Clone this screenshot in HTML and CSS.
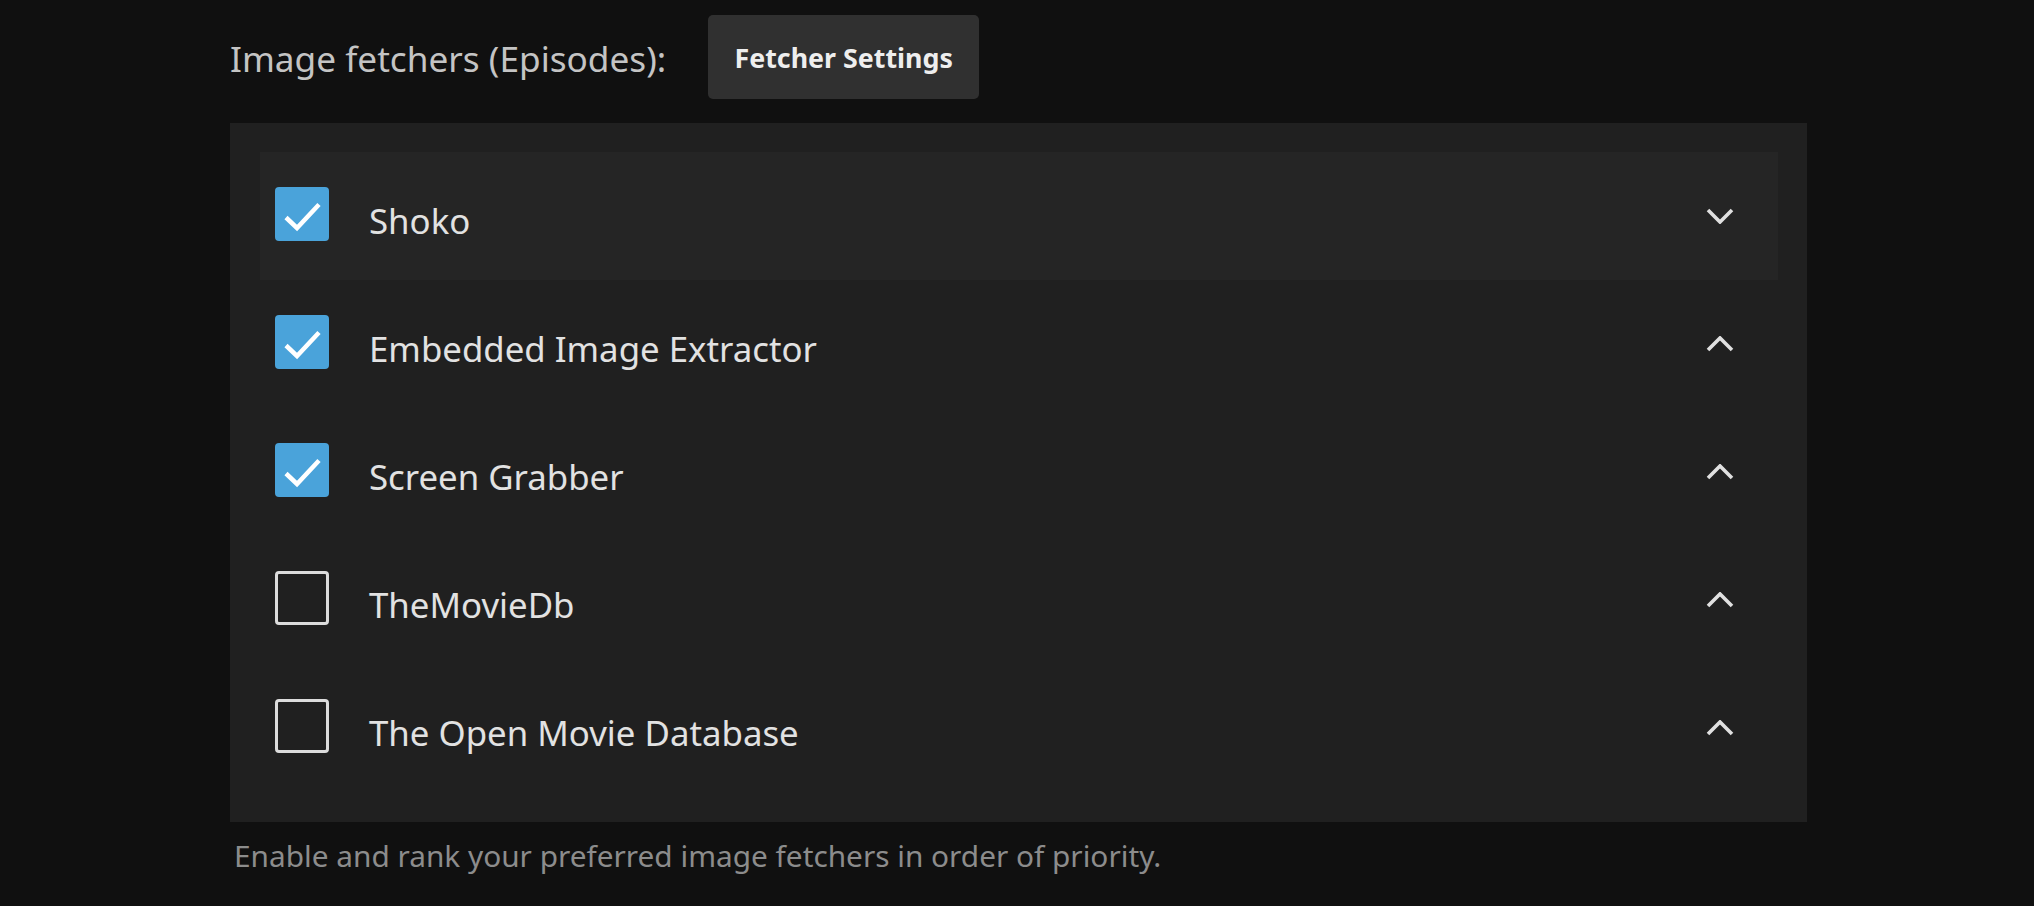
FILE: index.html
```html
<!DOCTYPE html>
<html>
<head>
<meta charset="utf-8">
<link rel="stylesheet" href="styles.css">
</head>
<body>
<div class="section">
  <div class="header">
    <h3 class="title">Image fetchers (Episodes):</h3>
    <button class="btn">Fetcher Settings</button>
  </div>
  <div class="panel">
    <div class="row active">
      <span class="cb checked"><svg viewBox="0 0 54 54" width="54" height="54"><polyline points="11,30.5 22,41 44,17.5" fill="none" stroke="#fff" stroke-width="4.5"/></svg></span>
      <span class="label">Shoko</span>
      <svg class="chev" viewBox="0 0 28 16" width="28" height="16"><polyline points="2,2 14,14 26,2" fill="none" stroke="#e0e0e0" stroke-width="3.6"/></svg>
    </div>
    <div class="row">
      <span class="cb checked"><svg viewBox="0 0 54 54" width="54" height="54"><polyline points="11,30.5 22,41 44,17.5" fill="none" stroke="#fff" stroke-width="4.5"/></svg></span>
      <span class="label">Embedded Image Extractor</span>
      <svg class="chev" viewBox="0 0 28 16" width="28" height="16"><polyline points="2,14 14,2 26,14" fill="none" stroke="#e0e0e0" stroke-width="3.6"/></svg>
    </div>
    <div class="row">
      <span class="cb checked"><svg viewBox="0 0 54 54" width="54" height="54"><polyline points="11,30.5 22,41 44,17.5" fill="none" stroke="#fff" stroke-width="4.5"/></svg></span>
      <span class="label">Screen Grabber</span>
      <svg class="chev" viewBox="0 0 28 16" width="28" height="16"><polyline points="2,14 14,2 26,14" fill="none" stroke="#e0e0e0" stroke-width="3.6"/></svg>
    </div>
    <div class="row">
      <span class="cb"></span>
      <span class="label">TheMovieDb</span>
      <svg class="chev" viewBox="0 0 28 16" width="28" height="16"><polyline points="2,14 14,2 26,14" fill="none" stroke="#e0e0e0" stroke-width="3.6"/></svg>
    </div>
    <div class="row">
      <span class="cb"></span>
      <span class="label">The Open Movie Database</span>
      <svg class="chev" viewBox="0 0 28 16" width="28" height="16"><polyline points="2,14 14,2 26,14" fill="none" stroke="#e0e0e0" stroke-width="3.6"/></svg>
    </div>
  </div>
  <div class="help">Enable and rank your preferred image fetchers in order of priority.</div>
</div>
</body>
</html>
```
FILE: styles.css
```css
html, body {
  margin: 0;
  padding: 0;
  background: #101010;
  height: 100%;
}
body {
  font-family: "Noto Sans", "Open Sans", sans-serif;
  color: #e0e0e0;
  overflow: hidden;
}
.section {
  margin-left: 230px;
  width: 1577px;
  padding-top: 15px;
}
.header {
  display: flex;
  align-items: center;
  height: 84px;
}
.title {
  margin: 0 42px 0 0;
  font-size: 35.2px;
  font-weight: 400;
  color: #c4c4c4;
  line-height: 1;
  padding-top: 3px;
}
.btn {
  font-family: "Noto Sans", "Open Sans", sans-serif;
  background: #303030;
  color: #eeeeee;
  border: none;
  border-radius: 5px;
  height: 84px;
  width: 271px;
  padding: 0;
  font-size: 26.8px;
  font-weight: 700;
}
.panel {
  margin-top: 24px;
  background: #202020;
  padding: 29px 29px 30px 30px;
}
.row {
  display: flex;
  align-items: center;
  height: 128px;
  padding-left: 15px;
  padding-right: 44px;
}
.row.active {
  background: #252525;
}
.cb {
  width: 54px;
  height: 54px;
  box-sizing: border-box;
  border: 3.5px solid #dcdcdc;
  border-radius: 4px;
  flex: none;
  margin-top: -4px;
}
.cb.checked {
  background: #4aa3da;
  border: none;
}
.cb svg {
  display: block;
}
.label {
  flex: 1;
  margin-left: 40px;
  padding-top: 9px;
  font-size: 34.8px;
  color: #e2e2e2;
}
.chev {
  flex: none;
  display: block;
}
.help {
  margin-top: 13px;
  margin-left: 4px;
  font-size: 29.8px;
  line-height: 1.4;
  color: #8c8c8c;
}
```
